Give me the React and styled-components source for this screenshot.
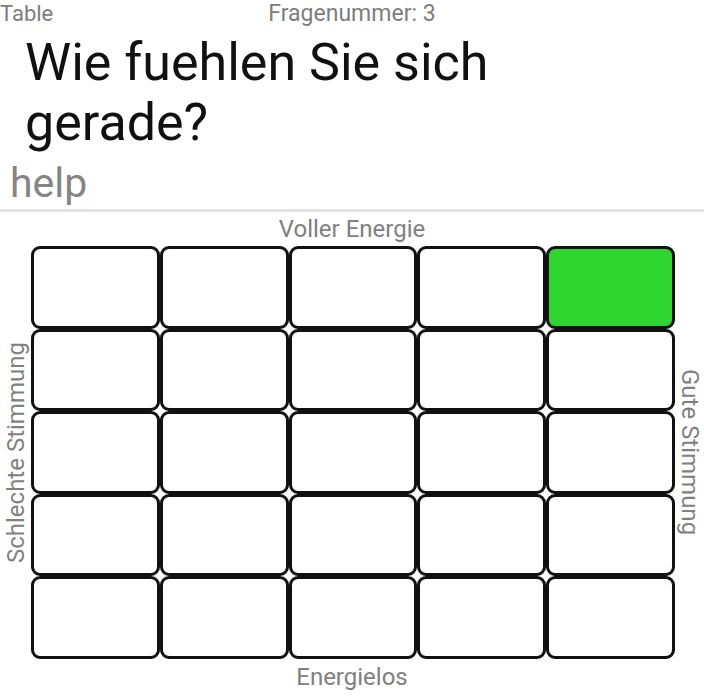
import React, { useState } from 'react';
import styled, { createGlobalStyle } from 'styled-components';

const GlobalStyle = createGlobalStyle`
  html, body {
    margin: 0;
    padding: 0;
    background: #fff;
    font-family: Roboto, "Liberation Sans", sans-serif;
  }
`;

const ROWS = 5;
const COLS = 5;

const App = () => {
  const [selected, setSelected] = useState({ row: 0, col: 4 });

  const cells = [];
  for (let r = 0; r < ROWS; r++) {
    for (let c = 0; c < COLS; c++) {
      cells.push(
        <Cell
          key={`${r}-${c}`}
          $active={selected.row === r && selected.col === c}
          onClick={() => setSelected({ row: r, col: c })}
        />
      );
    }
  }

  return (
    <Page>
      <GlobalStyle />
      <Header>
        <Title>Table</Title>
        <Number>Fragenummer: 3</Number>
        <span />
      </Header>
      <Question>Wie fuehlen Sie sich gerade?</Question>
      <Help>help</Help>
      <Divider />
      <Board>
        <TopLabel>Voller Energie</TopLabel>
        <SideLabel $left>Schlechte Stimmung</SideLabel>
        <Grid>{cells}</Grid>
        <SideLabel>Gute Stimmung</SideLabel>
        <BottomLabel>Energielos</BottomLabel>
      </Board>
    </Page>
  );
};

export default App;

const Page = styled.div`
  width: 704px;
  height: 697px;
  display: flex;
  flex-direction: column;
  overflow: hidden;
`;

const Header = styled.div`
  display: grid;
  grid-template-columns: 1fr auto 1fr;
  align-items: center;
  height: 26px;
  font-size: 22px;
  color: #7d7d7d;
`;

const Title = styled.span``;

const Number = styled.span`
  font-size: 23px;
`;

const Question = styled.h1`
  margin: 7px 0 0;
  padding: 0 24px 0 25px;
  max-width: 560px;
  font-size: 52px;
  font-weight: 400;
  line-height: 60px;
  color: #111;
`;

const Help = styled.div`
  margin-top: 7px;
  padding-left: 10px;
  font-size: 41px;
  line-height: 47px;
  color: #858585;
`;

const Divider = styled.div`
  height: 3px;
  margin-top: 2px;
  background: #e4e4e4;
`;

const Board = styled.div`
  display: grid;
  grid-template-columns: 31px 644px 29px;
  grid-template-rows: 34px 413px 38px;
  color: #808080;
  font-size: 24px;
`;

const TopLabel = styled.div`
  grid-column: 1 / 4;
  display: flex;
  align-items: center;
  justify-content: center;
`;

const BottomLabel = styled(TopLabel)`
  padding-bottom: 2px;
`;

const SideLabel = styled.div`
  display: flex;
  align-items: center;
  justify-content: center;
  writing-mode: vertical-rl;
  transform: ${(p) => (p.$left ? 'rotate(180deg)' : 'none')};
  white-space: nowrap;
`;

const Grid = styled.div`
  display: grid;
  grid-template-columns: repeat(${COLS}, 1fr);
  grid-template-rows: repeat(${ROWS}, 1fr);
`;

const Cell = styled.div`
  box-sizing: border-box;
  border: 3px solid #111;
  border-radius: 9px;
  background: ${(p) => (p.$active ? '#2fd62f' : '#fff')};
  cursor: pointer;
`;
